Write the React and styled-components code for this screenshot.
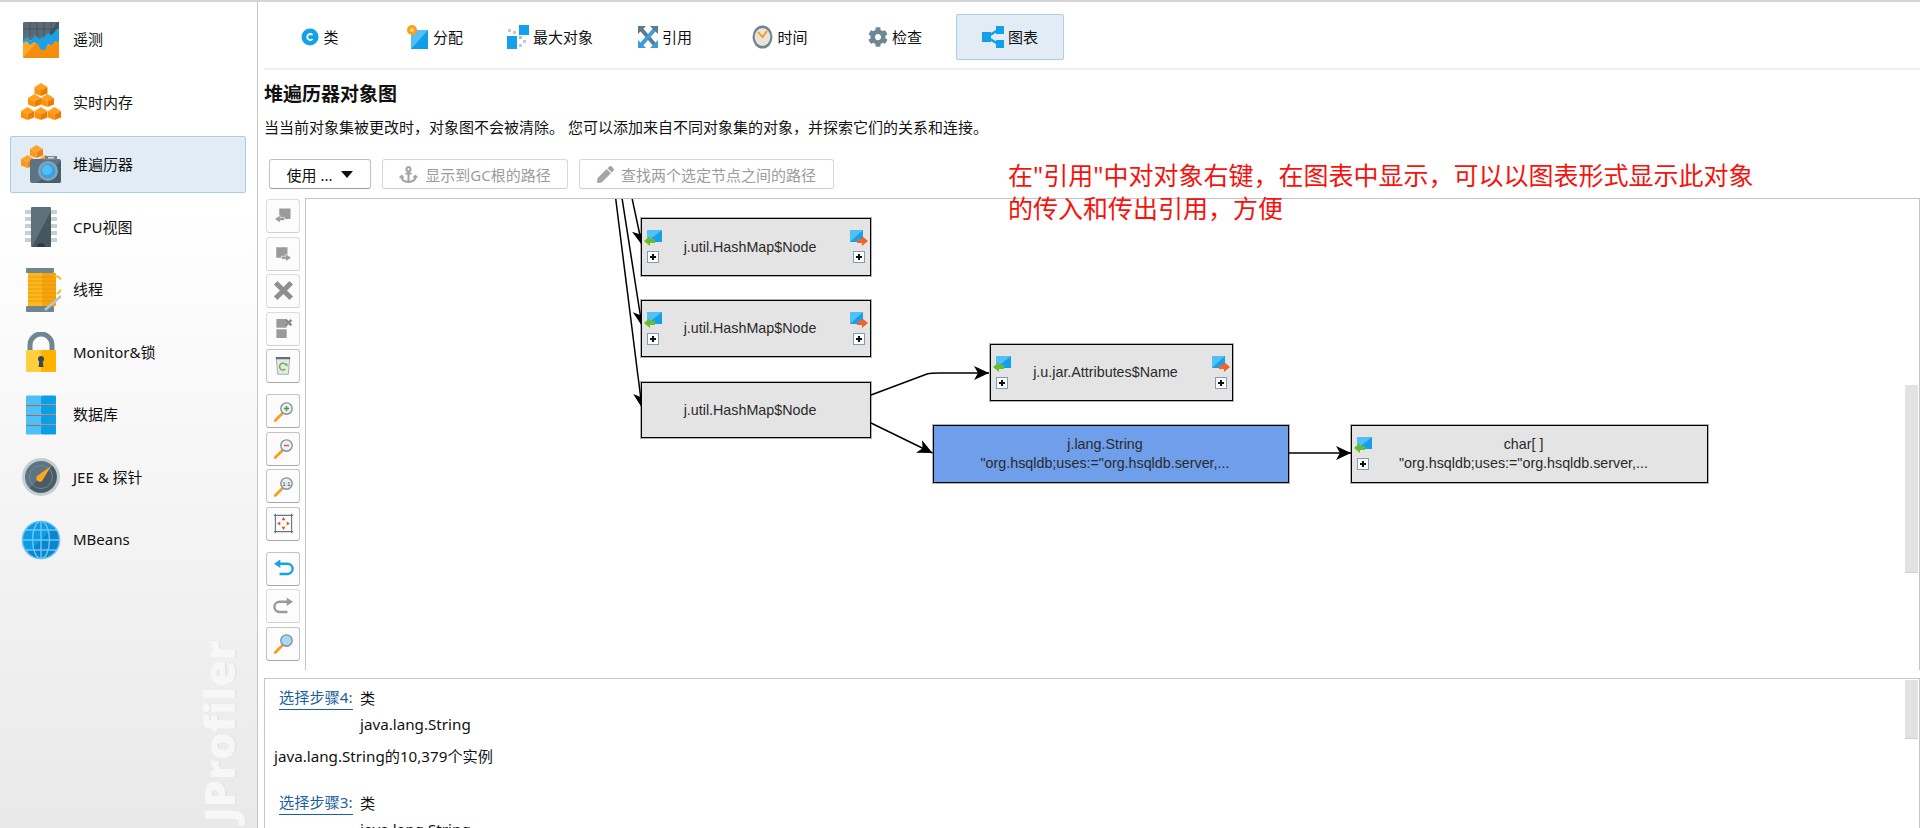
import React from "react";
import styled, { createGlobalStyle } from "styled-components";
import { FaAnchor, FaPen, FaCog } from "react-icons/fa";

const UI_FONT = `"Noto Sans", "Noto Sans CJK SC", sans-serif`;

const Global = createGlobalStyle`
  html, body { margin: 0; padding: 0; background: #fff; }
  body { font-family: ${UI_FONT}; font-size: 15px; color: #111; overflow: hidden; }
`;

const Page = styled.div`
  position: relative;
  display: flex;
  width: 1920px;
  height: 828px;
  box-sizing: border-box;
  border-top: 2px solid #d4d4d4;
  overflow: hidden;
`;

const Sidebar = styled.nav`
  position: relative;
  flex: 0 0 258px;
  box-sizing: border-box;
  padding: 9px 11px 0 10px;
  display: flex;
  flex-direction: column;
  gap: 5.5px;
  background: linear-gradient(#fff 0%, #fff 25%, #e9e9e9 100%);
  border-right: 1px solid #c6c6c6;
`;

const NavItem = styled.div`
  flex: 0 0 57px;
  box-sizing: border-box;
  display: flex;
  align-items: center;
  gap: 12px;
  padding-left: 10px;
  border: 1px solid ${(p) => (p.$active ? "#a9cdea" : "transparent")};
  border-radius: 2px;
  background: ${(p) => (p.$active ? "#e2ecf5" : "transparent")};
  svg { flex: 0 0 40px; }
  span { margin-top: -2px; }
`;

const Watermark = styled.div`
  position: absolute;
  left: 194px;
  bottom: 6px;
  writing-mode: vertical-rl;
  transform: rotate(180deg);
  font-family: "Open Sans", sans-serif;
  font-weight: 800;
  font-size: 43px;
  line-height: 50px;
  color: #f7f7f7;
  text-shadow: 0 1px 0 #e0e0e0;
`;

const Main = styled.main`
  flex: 1;
  min-width: 0;
  display: flex;
  flex-direction: column;
  padding-left: 6px;
`;

const TabBar = styled.div`
  display: flex;
  gap: 7px;
  padding: 12px 0 8px 2px;
  border-bottom: 2px solid #efefef;
`;

const Tab = styled.div`
  flex: 0 0 108px;
  height: 46px;
  box-sizing: border-box;
  display: flex;
  align-items: center;
  justify-content: center;
  gap: 4px;
  border: 1px solid ${(p) => (p.$active ? "#a9cdea" : "transparent")};
  border-radius: 2px;
  background: ${(p) => (p.$active ? "#e2ecf5" : "transparent")};
  span { margin-top: -1px; }
`;

const Title = styled.h1`
  margin: 11px 0 0;
  font-size: 19px;
  line-height: 26px;
  font-weight: 700;
  color: #111;
`;

const Description = styled.p`
  margin: 8px 0 0;
  font-size: 15px;
  line-height: 24px;
  color: #111;
`;

const ActionRow = styled.div`
  display: flex;
  gap: 11px;
  margin: 20px 0 0 5px;
`;

const ActionButton = styled.div`
  height: 30px;
  box-sizing: border-box;
  width: ${(p) => p.$w}px;
  display: flex;
  align-items: center;
  justify-content: center;
  gap: 7px;
  font-size: 15px;
  background: #fff;
  border-radius: 3px;
  border: 1px solid ${(p) => (p.$disabled ? "#d8d8d8" : "#c0c0c0")};
  border-bottom-color: ${(p) => (p.$disabled ? "#cfcfcf" : "#9b9b9b")};
  color: ${(p) => (p.$disabled ? "#9c9c9c" : "#111")};
`;

const Caret = styled.span`
  width: 0;
  height: 0;
  margin-left: 2px;
  border-left: 6px solid transparent;
  border-right: 6px solid transparent;
  border-top: 7px solid #111;
`;

const Workspace = styled.div`
  display: flex;
  gap: 5px;
  height: 472px;
  margin: 9px 0 0 2px;
`;

const ToolColumn = styled.div`
  flex: 0 0 34px;
  display: flex;
  flex-direction: column;
  gap: 11px;
  padding-top: 1px;
`;

const ToolGroup = styled.div`
  display: flex;
  flex-direction: column;
  gap: 3.5px;
`;

const ToolButton = styled.div`
  height: 34px;
  box-sizing: border-box;
  display: flex;
  align-items: center;
  justify-content: center;
  border-radius: 3px;
  background: #fcfcfc;
  border: 1px solid ${(p) => (p.$off ? "#dcdcdc" : "#c4c4c4")};
  border-bottom-color: ${(p) => (p.$off ? "#d0d0d0" : "#a8a8a8")};
`;

const Canvas = styled.div`
  position: relative;
  flex: 1;
  border-left: 1px solid #c4c4c4;
  border-top: 1px solid #c4c4c4;
  border-right: 1px solid #c4c4c4;
  background: #fff;
  overflow: hidden;
`;

const Edges = styled.svg`
  position: absolute;
  inset: 0;
  width: 100%;
  height: 100%;
`;

const Node = styled.div`
  position: absolute;
  left: ${(p) => p.$x}px;
  top: ${(p) => p.$y}px;
  width: ${(p) => p.$w}px;
  height: ${(p) => p.$h}px;
  box-sizing: border-box;
  padding-right: 12px;
  display: flex;
  flex-direction: column;
  align-items: center;
  justify-content: center;
  border: 1px solid #000;
  box-shadow: 0 0 0 1px rgba(0, 0, 0, 0.3);
  background: ${(p) => (p.$selected ? "#6f9eea" : "#e4e4e4")};
  font-family: "Liberation Sans", Arial, sans-serif;
  font-size: 14.3px;
  line-height: 19px;
  color: #2a2a2a;
  white-space: pre;
`;

const PortIcon = styled.svg`
  position: absolute;
  top: 11px;
  ${(p) => (p.$right ? "right: 2px;" : "left: 2px;")}
`;

const Expand = styled.span`
  position: absolute;
  top: 32px;
  ${(p) => (p.$right ? "right: 5px;" : "left: 5px;")}
  width: 12px;
  height: 12px;
  box-sizing: border-box;
  border: 1px solid #7f9db9;
  background: #fff;
  &::before, &::after {
    content: "";
    position: absolute;
    background: #111;
  }
  &::before { left: 2px; top: 4px; width: 6px; height: 2px; }
  &::after { left: 4px; top: 2px; width: 2px; height: 6px; }
`;

const ScrollThumb = styled.div`
  position: absolute;
  right: 1px;
  top: ${(p) => p.$top}px;
  width: 13px;
  height: ${(p) => p.$h}px;
  background: #e2e2e2;
  border-bottom: 1px solid #cfcfcf;
`;

const Details = styled.section`
  position: relative;
  height: 150px;
  margin-top: 8px;
  box-sizing: border-box;
  padding: 6px 0 0 9px;
  border-top: 1px solid #c6c6c6;
  border-left: 1px solid #c6c6c6;
  border-right: 1px solid #c6c6c6;
  overflow: hidden;
  font-size: 15.2px;
  line-height: 26px;
`;

const StepRow = styled.div`
  display: grid;
  grid-template-columns: 81px 1fr;
  margin-left: 5px;
  margin-top: ${(p) => p.$top || 0}px;
`;

const StepLink = styled.span`
  justify-self: start;
  color: #1a5fa0;
  line-height: 24px;
  border-bottom: 1px solid #1a5fa0;
  height: 24px;
`;

const InstanceLine = styled.div`
  margin-top: 6px;
`;

const Note = styled.div`
  position: absolute;
  left: 1008px;
  top: 157px;
  width: 780px;
  font-size: 25px;
  line-height: 33px;
  color: #f5130d;
`;

/* ---------- sidebar icons ---------- */

const TelemetryIcon = () => (
  <svg width="40" height="40" viewBox="0 0 40 40">
    <rect x="2" y="2" width="36" height="36" rx="1.5" fill="#ffa726" />
    <path d="M2 38 L16 22 L21 30 L38 18 V38Z" fill="#f58e0c" />
    <path d="M2 3.5 A1.5 1.5 0 0 1 3.5 2 H36.5 A1.5 1.5 0 0 1 38 3.5 V20 H2Z" fill="#5b6c76" />
    <path d="M38 2 V14 L24 20 L36 2Z" fill="#46545d" />
    <path d="M9 2V16M16 2V16M23 2V16M30 2V16M2 9H38" stroke="#46535b" strokeWidth="1" />
    <path d="M2 20 L6 17 L10 21 L14 15 L18 19 L23 17 L27 13 L31 15 L35 10 L38 8 V22 L34 21 L31 25 L27 24 L24 30 L20 30 L17 24 L13 22 L9 25 L6 21 L2 23Z" fill="#1ba1e8" />
  </svg>
);

const cube = (x, y, s = 13) => (
  <g key={`${x}-${y}`}>
    <path d={`M${x} ${y + s * 0.3} L${x + s / 2} ${y} L${x + s} ${y + s * 0.3} L${x + s / 2} ${y + s * 0.55}Z`} fill="#ffa01e" />
    <path d={`M${x} ${y + s * 0.3} L${x + s / 2} ${y + s * 0.55} V${y + s} L${x} ${y + s * 0.8}Z`} fill="#ff9108" />
    <path d={`M${x + s} ${y + s * 0.3} L${x + s / 2} ${y + s * 0.55} V${y + s} L${x + s} ${y + s * 0.8}Z`} fill="#ef7a00" />
  </g>
);

const MemoryIcon = () => (
  <svg width="40" height="40" viewBox="0 0 40 40">
    {cube(13.5, 1)}
    {cube(7, 12)}
    {cube(20, 12)}
    {cube(0, 25)}
    {cube(13.5, 25)}
    {cube(27, 25)}
  </svg>
);

const HeapIcon = () => (
  <svg width="40" height="40" viewBox="0 0 40 40">
    <g opacity="0.92">
      {cube(9, 0, 13)}
      {cube(0, 10, 13)}
      {cube(18, 10, 13)}
    </g>
    <rect x="9" y="14" width="31" height="24" rx="2" fill="#5d7384" />
    <path d="M40 16 V36 A2 2 0 0 1 38 38 H16Z" fill="#4a5e6d" />
    <rect x="24" y="11" width="12" height="4" fill="#71848f" />
    <rect x="27" y="12" width="6" height="1.5" fill="#d8e0e6" />
    <circle cx="27" cy="26" r="10" fill="#8aa2b2" />
    <circle cx="27" cy="26" r="7.5" fill="#31a3e8" />
    <circle cx="26" cy="25" r="5" fill="#55bdf3" />
  </svg>
);

const CpuIcon = () => (
  <svg width="40" height="40" viewBox="0 0 40 40">
    {[3, 10, 17, 24, 31].map((y) => (
      <path key={y} d={`M4 ${y + 2} H36`} stroke="#c4d0d6" strokeWidth="4" />
    ))}
    <rect x="10" y="0" width="20" height="40" rx="1" fill="#5d707c" />
    <path d="M30 4 V39 A1 1 0 0 1 29 40 H11Z" fill="#46565f" />
    <path d="M16 40 A4 4 0 0 1 24 40Z" fill="#2f3b42" />
  </svg>
);

const ThreadIcon = () => (
  <svg width="40" height="44" viewBox="0 0 40 44">
    <rect x="7" y="5" width="28" height="33" fill="#ffb81c" />
    <path d="M21 5 H35 V38 H21Z" fill="#f7a30f" />
    {[9, 13, 17, 21, 25, 29, 33].map((y) => (
      <path key={y} d={`M7 ${y} H35`} stroke="#e79a08" strokeWidth="1" />
    ))}
    <rect x="5" y="0" width="28" height="5" rx="1" fill="#71858f" />
    <rect x="5" y="38" width="28" height="6" rx="1" fill="#71858f" />
    <path d="M33 8 C42 8 44 18 40 22 L36 26" stroke="#ffb81c" strokeWidth="2" fill="none" />
    <path d="M24 42 L40 28" stroke="#b8c4ca" strokeWidth="2.5" />
  </svg>
);

const LockIcon = () => (
  <svg width="40" height="40" viewBox="0 0 40 40">
    <path d="M9 20 V13 A11 11 0 0 1 31 13 V20" fill="none" stroke="#6f8693" strokeWidth="5" />
    <rect x="5" y="18" width="30" height="22" rx="1.5" fill="#ffcf40" />
    <path d="M20 18 H33.5 A1.5 1.5 0 0 1 35 19.5 V38.5 A1.5 1.5 0 0 1 33.5 40 H20Z" fill="#ffb300" />
    <circle cx="20" cy="27" r="3" fill="#37474f" />
    <path d="M18.5 28 H21.5 L22.5 35 H17.5Z" fill="#37474f" />
  </svg>
);

const DatabaseIcon = () => (
  <svg width="40" height="40" viewBox="0 0 40 40">
    {[0, 10, 20, 30].map((y) => (
      <g key={y}>
        <rect x="5" y={y + 0.5} width="15" height="9" rx="1" fill="#4fc0f5" />
        <rect x="20" y={y + 0.5} width="15" height="9" rx="1" fill="#0a9fe6" />
        {y > 0 && <rect x="5" y={y - 0.5} width="30" height="1.5" fill="#66808f" />}
      </g>
    ))}
  </svg>
);

const GaugeIcon = () => (
  <svg width="40" height="40" viewBox="0 0 40 40">
    <circle cx="20" cy="20" r="19" fill="#c3ced3" />
    <circle cx="20" cy="20" r="16" fill="#5f7482" />
    <path d="M31.3 8.7 A16 16 0 0 1 8.7 31.3Z" fill="#495b66" />
    <circle cx="20" cy="20" r="11.5" fill="none" stroke="#738794" strokeWidth="1" />
    <path d="M30 9 L22 22.5 A3.5 3.5 0 1 1 17.5 18Z" fill="#ffa51f" />
  </svg>
);

const GlobeIcon = () => (
  <svg width="40" height="40" viewBox="0 0 40 40">
    <circle cx="20" cy="20" r="19" fill="#0d9be3" />
    <path d="M33.4 6.6 A19 19 0 0 1 6.6 33.4Z" fill="#0a86cf" />
    <g fill="none" stroke="#6cc6f5" strokeWidth="1.4">
      <circle cx="20" cy="20" r="18.6" />
      <ellipse cx="20" cy="20" rx="8.5" ry="18.6" />
      <path d="M20 1 V39 M1 20 H39 M4 10 H36 M4 30 H36" />
    </g>
  </svg>
);

/* ---------- tab icons ---------- */

const ClassIcon = () => (
  <svg width="18" height="18" viewBox="0 0 18 18">
    <circle cx="9" cy="9" r="8.5" fill="#12a2ea" />
    <path d="M11.5 7 A3 3 0 1 0 11.5 11" fill="none" stroke="#fff" strokeWidth="1.8" />
  </svg>
);

const AllocIcon = () => (
  <svg width="22" height="24" viewBox="0 0 22 24">
    <rect x="4" y="5" width="17" height="19" fill="#0f9fe8" />
    <path d="M21 5 V5 L4 24 V5Z" fill="#53bff5" />
    <circle cx="5" cy="5" r="5" fill="#ff9f12" />
    <circle cx="5" cy="5" r="2" fill="#ffd479" />
  </svg>
);

const BiggestIcon = () => (
  <svg width="22" height="24" viewBox="0 0 22 24">
    <rect x="12" y="0" width="10" height="10" fill="#14a0ea" />
    <rect x="0" y="11" width="10" height="13" fill="#14a0ea" />
    <rect x="12" y="11" width="3" height="3" fill="#9cc" />
    <rect x="16" y="15" width="3" height="3" fill="#bcd" />
    <rect x="12" y="19" width="3" height="3" fill="#bcd" />
    <rect x="1" y="4" width="3" height="3" fill="#bcd" />
    <rect x="6" y="6" width="3" height="3" fill="#bcd" />
  </svg>
);

const RefsIcon = () => (
  <svg width="20" height="22" viewBox="0 0 20 22">
    <path d="M3 3 L17 19" stroke="#5c7b8e" strokeWidth="4" />
    <path d="M17 3 L3 19" stroke="#3a9ed8" strokeWidth="4" />
    <path d="M0 0 H8 L0 8Z M20 0 V8 L12 0Z" fill="#5c7b8e" />
    <path d="M0 22 V14 L8 22Z M20 22 H12 L20 14Z" fill="#3a9ed8" />
  </svg>
);

const ClockIcon = () => (
  <svg width="21" height="24" viewBox="0 0 21 24">
    <ellipse cx="10.5" cy="12" rx="10" ry="11.5" fill="#71858f" />
    <ellipse cx="10.5" cy="12" rx="7.8" ry="9" fill="#e8e4da" />
    <path d="M6 7 L10.5 12 L15 6" stroke="#f59a1c" strokeWidth="1.8" fill="none" />
  </svg>
);

const GraphIcon = () => (
  <svg width="22" height="22" viewBox="0 0 22 22">
    <path d="M5 11 L16 4 M5 11 L16 18" stroke="#12a0e8" strokeWidth="2.5" />
    <rect x="0" y="6" width="9" height="10" fill="#12a0e8" />
    <rect x="14" y="0" width="8" height="8" fill="#12a0e8" />
    <rect x="14" y="14" width="8" height="8" fill="#12a0e8" />
  </svg>
);

/* ---------- graph toolbar icons ---------- */

const G = "#9a9a9a";

const InIcon = () => (
  <svg width="18" height="18" viewBox="0 0 24 24">
    <rect x="7" y="2" width="15" height="14" fill={G} />
    <path d="M1 16 L8 11 V14 H14 V18 H8 V21Z" fill={G} stroke="#fcfcfc" strokeWidth="0.8" />
  </svg>
);

const OutIcon = () => (
  <svg width="18" height="18" viewBox="0 0 24 24">
    <rect x="3" y="3" width="15" height="14" fill={G} />
    <path d="M23 17 L16 12 V15 H10 V19 H16 V22Z" fill={G} stroke="#fcfcfc" strokeWidth="0.8" />
  </svg>
);

const CrossIcon = () => (
  <svg width="22" height="22" viewBox="0 0 24 24">
    <path d="M4 3 L21 20 M21 3 L4 20" stroke="#8f8f8f" strokeWidth="5.5" />
  </svg>
);

const RemoveIcon = () => (
  <svg width="19" height="21" viewBox="0 0 24 26">
    <rect x="3" y="1" width="13" height="11" fill={G} />
    <rect x="3" y="14" width="13" height="11" fill={G} />
    <path d="M15 2 L22 9 M22 2 L15 9" stroke="#8a8a8a" strokeWidth="3" />
  </svg>
);

const TrashIcon = () => (
  <svg width="18" height="20" viewBox="0 0 24 26">
    <path d="M3 2 H21 L19 24 H5Z" fill="#e4e9e8" stroke="#8a9a9a" strokeWidth="1" />
    <rect x="2.5" y="1" width="19" height="3" fill="#5d707c" />
    <path d="M16 12 A4.5 4.5 0 1 0 15 17" fill="none" stroke="#63b83a" strokeWidth="2" />
    <path d="M14 10 H18 V14Z" fill="#63b83a" />
  </svg>
);

const Lens = ({ children, fill = "#eef1f2" }) => (
  <svg width="21" height="21" viewBox="0 0 28 28">
    <path d="M3 26 L12 17" stroke="#ff9a1a" strokeWidth="3.5" strokeLinecap="round" />
    <circle cx="18" cy="10" r="7.6" fill={fill} stroke="#7d929e" strokeWidth="1.8" />
    {children}
  </svg>
);

const FitIcon = () => (
  <svg width="21" height="21" viewBox="0 0 26 26">
    <path d="M3 1 V25 M23 1 V25 M1 3 H25 M1 23 H25" stroke="#64788a" strokeWidth="1.4" />
    <path d="M13 5 L15.5 9 H10.5Z M13 21 L15.5 17 H10.5Z M5 13 L9 10.5 V15.5Z M21 13 L17 10.5 V15.5Z" fill="#e0552b" />
  </svg>
);

const TurnIcon = ({ color, flip }) => (
  <svg width="21" height="19" viewBox="0 0 26 24" transform={flip ? "scale(-1 1)" : undefined}>
    <path d="M6 6 H18 A6 6 0 0 1 18 19 H8" fill="none" stroke={color} strokeWidth="3" />
    <path d="M1 6 L9 0.5 V11.5Z" fill={color} />
  </svg>
);

/* ---------- graph data ---------- */

const PortIn = () => (
  <PortIcon width="18" height="17" viewBox="0 0 18 17">
    <rect x="3" y="0" width="15" height="12" fill="#14a0ea" />
    <path d="M3 12 L18 0 H3Z" fill="#50c0f5" />
    <path d="M0 11 L6 6 V9 H11 V13 H6 V16Z" fill="#6cbb2a" />
  </PortIcon>
);

const PortOut = () => (
  <PortIcon $right width="18" height="17" viewBox="0 0 18 17">
    <rect x="0" y="0" width="13" height="12" fill="#14a0ea" />
    <path d="M0 12 L13 0 H0Z" fill="#50c0f5" />
    <path d="M18 11 L12 6 V9 H7 V13 H12 V16Z" fill="#f4622a" />
  </PortIcon>
);

const nodes = [
  { id: 1, x: 335, y: 19, w: 230, h: 58, lines: ["j.util.HashMap$Node"], inPort: true, outPort: true },
  { id: 2, x: 335, y: 101, w: 230, h: 57, lines: ["j.util.HashMap$Node"], inPort: true, outPort: true },
  { id: 3, x: 335, y: 183, w: 230, h: 56, lines: ["j.util.HashMap$Node"] },
  { id: 4, x: 684, y: 145, w: 243, h: 57, lines: ["j.u.jar.Attributes$Name"], inPort: true, outPort: true },
  { id: 5, x: 627, y: 226, w: 356, h: 58, selected: true, lines: ["j.lang.String", `"org.hsqldb;uses:="org.hsqldb.server,...`] },
  { id: 6, x: 1045, y: 226, w: 357, h: 58, lines: ["char[ ]", `"org.hsqldb;uses:="org.hsqldb.server,...`], inPort: true },
];

const edges = [
  "M309.6 -1 L336 209",
  "M316 -1 L336 127",
  "M326 -1 L336 46",
  "M565 196 L621 175 Q625 174 633 174 L683 174",
  "M565 224 L626.5 254",
  "M983 254 L1045 254",
];

const sideItems = [
  [TelemetryIcon, "遥测"],
  [MemoryIcon, "实时内存"],
  [HeapIcon, "堆遍历器", true],
  [CpuIcon, "CPU视图"],
  [ThreadIcon, "线程"],
  [LockIcon, "Monitor&锁"],
  [DatabaseIcon, "数据库"],
  [GaugeIcon, "JEE & 探针"],
  [GlobeIcon, "MBeans"],
];

const tabs = [
  [ClassIcon, "类"],
  [AllocIcon, "分配"],
  [BiggestIcon, "最大对象"],
  [RefsIcon, "引用"],
  [ClockIcon, "时间"],
  [() => <FaCog size={20} color="#6f8795" />, "检查"],
  [GraphIcon, "图表", true],
];

export default function App() {
  return (
    <>
      <Global />
      <Page>
        <Sidebar>
          {sideItems.map(([Icon, label, active]) => (
            <NavItem key={label} $active={active}>
              <Icon />
              <span>{label}</span>
            </NavItem>
          ))}
          <Watermark>JProfiler</Watermark>
        </Sidebar>
        <Main>
          <TabBar>
            {tabs.map(([Icon, label, active]) => (
              <Tab key={label} $active={active}>
                <Icon />
                <span>{label}</span>
              </Tab>
            ))}
          </TabBar>
          <Title>堆遍历器对象图</Title>
          <Description>当当前对象集被更改时，对象图不会被清除。 您可以添加来自不同对象集的对象，并探索它们的关系和连接。</Description>
          <ActionRow>
            <ActionButton $w={102}>
              使用 ...
              <Caret />
            </ActionButton>
            <ActionButton $w={186} $disabled>
              <FaAnchor size={19} color="#a5a5a5" />
              显示到GC根的路径
            </ActionButton>
            <ActionButton $w={255} $disabled>
              <FaPen size={17} color="#a5a5a5" />
              查找两个选定节点之间的路径
            </ActionButton>
          </ActionRow>
          <Workspace>
            <ToolColumn>
              <ToolGroup>
                <ToolButton $off><InIcon /></ToolButton>
                <ToolButton $off><OutIcon /></ToolButton>
                <ToolButton $off><CrossIcon /></ToolButton>
                <ToolButton $off><RemoveIcon /></ToolButton>
                <ToolButton><TrashIcon /></ToolButton>
              </ToolGroup>
              <ToolGroup>
                <ToolButton>
                  <Lens><path d="M14.5 10 H21.5 M18 6.5 V13.5" stroke="#4f9a2a" strokeWidth="2" /></Lens>
                </ToolButton>
                <ToolButton>
                  <Lens><path d="M14.5 10 H21.5" stroke="#e0603a" strokeWidth="2" /></Lens>
                </ToolButton>
                <ToolButton>
                  <Lens><text x="18" y="13" fontSize="8" fontFamily="Liberation Sans" textAnchor="middle" fill="#333">1:1</text></Lens>
                </ToolButton>
                <ToolButton><FitIcon /></ToolButton>
              </ToolGroup>
              <ToolGroup>
                <ToolButton><TurnIcon color="#16a3ec" /></ToolButton>
                <ToolButton $off><TurnIcon color="#9a9a9a" flip /></ToolButton>
                <ToolButton><Lens fill="#a9d8f3" /></ToolButton>
              </ToolGroup>
            </ToolColumn>
            <Canvas>
              <Edges>
                <defs>
                  <marker id="head" markerUnits="userSpaceOnUse" markerWidth="16" markerHeight="14" refX="15" refY="7" orient="auto">
                    <path d="M0 0 L15 7 L0 14 L4 7Z" fill="#000" />
                  </marker>
                </defs>
                {edges.map((d) => (
                  <path key={d} d={d} fill="none" stroke="#000" strokeWidth="1.5" markerEnd="url(#head)" />
                ))}
              </Edges>
              {nodes.map((n) => (
                <Node key={n.id} $x={n.x} $y={n.y} $w={n.w} $h={n.h} $selected={n.selected}>
                  {n.inPort && <PortIn />}
                  {n.inPort && <Expand />}
                  {n.outPort && <PortOut />}
                  {n.outPort && <Expand $right />}
                  {n.lines.map((line) => (
                    <span key={line}>{line}</span>
                  ))}
                </Node>
              ))}
              <ScrollThumb $top={186} $h={187} />
            </Canvas>
          </Workspace>
          <Details>
            <StepRow>
              <StepLink>选择步骤4:</StepLink>
              <span>类</span>
              <span />
              <span>java.lang.String</span>
            </StepRow>
            <InstanceLine>java.lang.String的10,379个实例</InstanceLine>
            <StepRow $top={21}>
              <StepLink>选择步骤3:</StepLink>
              <span>类</span>
              <span />
              <span>java.lang.String</span>
            </StepRow>
            <ScrollThumb $top={1} $h={58} />
          </Details>
        </Main>
        <Note>
          在"引用"中对对象右键，在图表中显示，可以以图表形式显示此对象
          <br />
          的传入和传出引用，方便
        </Note>
      </Page>
    </>
  );
}
